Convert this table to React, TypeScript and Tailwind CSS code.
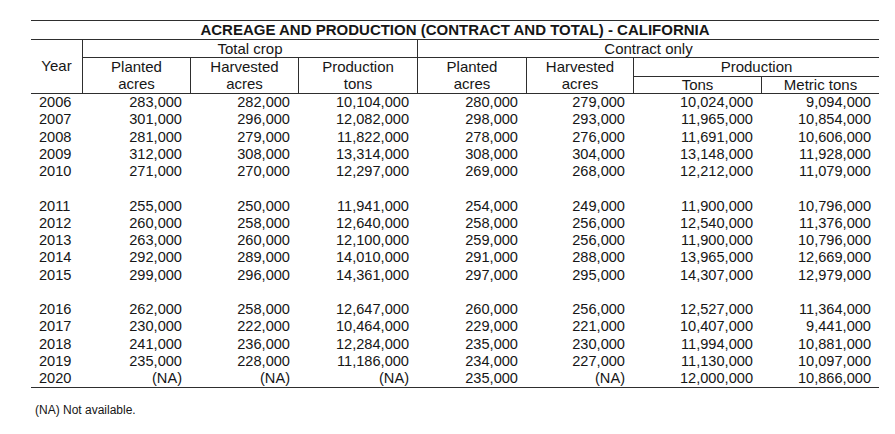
const COLS = "grid grid-cols-[51px_108px_108px_119px_109px_107px_128px_118px]";

type Row = [string, string, string, string, string, string, string, string];

const groups: Row[][] = [
  [
    ["2006", "283,000", "282,000", "10,104,000", "280,000", "279,000", "10,024,000", "9,094,000"],
    ["2007", "301,000", "296,000", "12,082,000", "298,000", "293,000", "11,965,000", "10,854,000"],
    ["2008", "281,000", "279,000", "11,822,000", "278,000", "276,000", "11,691,000", "10,606,000"],
    ["2009", "312,000", "308,000", "13,314,000", "308,000", "304,000", "13,148,000", "11,928,000"],
    ["2010", "271,000", "270,000", "12,297,000", "269,000", "268,000", "12,212,000", "11,079,000"],
  ],
  [
    ["2011", "255,000", "250,000", "11,941,000", "254,000", "249,000", "11,900,000", "10,796,000"],
    ["2012", "260,000", "258,000", "12,640,000", "258,000", "256,000", "12,540,000", "11,376,000"],
    ["2013", "263,000", "260,000", "12,100,000", "259,000", "256,000", "11,900,000", "10,796,000"],
    ["2014", "292,000", "289,000", "14,010,000", "291,000", "288,000", "13,965,000", "12,669,000"],
    ["2015", "299,000", "296,000", "14,361,000", "297,000", "295,000", "14,307,000", "12,979,000"],
  ],
  [
    ["2016", "262,000", "258,000", "12,647,000", "260,000", "256,000", "12,527,000", "11,364,000"],
    ["2017", "230,000", "222,000", "10,464,000", "229,000", "221,000", "10,407,000", "9,441,000"],
    ["2018", "241,000", "236,000", "12,284,000", "235,000", "230,000", "11,994,000", "10,881,000"],
    ["2019", "235,000", "228,000", "11,186,000", "234,000", "227,000", "11,130,000", "10,097,000"],
    ["2020", "(NA)", "(NA)", "(NA)", "235,000", "(NA)", "12,000,000", "10,866,000"],
  ],
];

const HeadCell = ({ top, bottom, className = "" }: { top: string; bottom: string; className?: string }) => (
  <div className={`row-span-2 flex flex-col items-center justify-center border-b border-l border-[#2e2e2e] leading-[16.5px] ${className}`}>
    <span>{top}</span>
    <span>{bottom}</span>
  </div>
);

const DataRow = ({ row }: { row: Row }) => (
  <div className={`${COLS} h-[17.25px] leading-[17.25px]`}>
    {row.map((v, i) =>
      i === 0 ? (
        <div key={i} className="pl-[8px]">{v}</div>
      ) : (
        <div key={i} className="pr-[8px] text-right">{v}</div>
      )
    )}
  </div>
);

export default function App() {
  return (
    <div className="h-[434px] w-[895px] bg-white text-[#161616] font-['Liberation_Sans',Arial,sans-serif]">
      <div className="ml-[31px] w-[848px] pt-[20px]">
        <div className={`${COLS} grid-rows-[19px_18px_19px_17px] border-t border-[#2e2e2e] text-[15px]`}>
          <div className="col-span-8 border-b border-[#2e2e2e] text-center font-bold leading-[18px]">
            ACREAGE AND PRODUCTION (CONTRACT AND TOTAL) - CALIFORNIA
          </div>
          <div className="row-span-3 flex items-center justify-center border-b border-[#2e2e2e]">Year</div>
          <div className="col-span-3 border-b border-l border-[#2e2e2e] text-center leading-[17px]">Total crop</div>
          <div className="col-span-4 border-b border-l border-[#2e2e2e] text-center leading-[17px]">Contract only</div>
          <HeadCell top="Planted" bottom="acres" />
          <HeadCell top="Harvested" bottom="acres" />
          <HeadCell top="Production" bottom="tons" />
          <HeadCell top="Planted" bottom="acres" />
          <HeadCell top="Harvested" bottom="acres" />
          <div className="col-span-2 border-b border-l border-[#2e2e2e] text-center leading-[18px]">Production</div>
          <div className="border-b border-l border-[#2e2e2e] text-center leading-[16px]">Tons</div>
          <div className="border-b border-l border-[#2e2e2e] text-center leading-[16px]">Metric tons</div>
        </div>

        <div className="border-b border-[#2e2e2e] text-[14.6px]">
          {groups.map((g, gi) => (
            <div key={gi}>
              {gi > 0 && <div className="h-[17.25px]" />}
              {g.map((r) => (
                <DataRow key={r[0]} row={r} />
              ))}
            </div>
          ))}
        </div>

        <p className="mt-[15px] pl-[4px] text-[12px] leading-[14px]">(NA) Not available.</p>
      </div>
    </div>
  );
}
